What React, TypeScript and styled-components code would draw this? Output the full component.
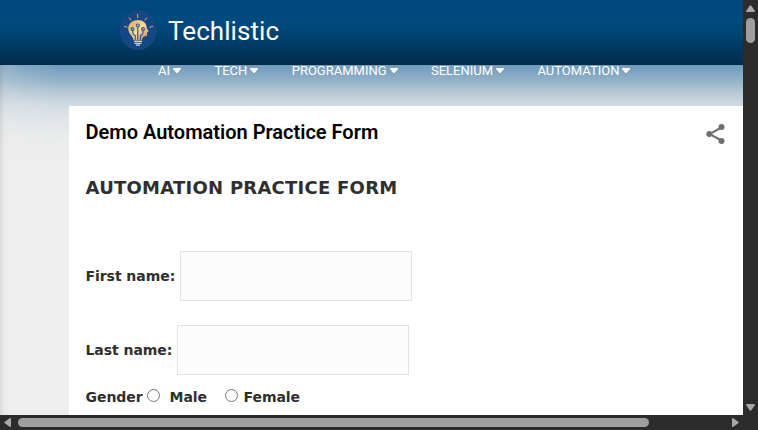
import React from "react";
import styled, { createGlobalStyle } from "styled-components";

const GlobalStyle = createGlobalStyle`
  * { box-sizing: border-box; }
  html, body { margin: 0; padding: 0; overflow: hidden; }
`;

const Window = styled.div`
  display: grid;
  grid-template: 415px 15px / 743px 15px;
  width: 758px;
  height: 430px;
  background: #2c2c2c;
  overflow: hidden;
`;

const Page = styled.div`
  display: flex;
  flex-direction: column;
  overflow: hidden;
  background: #eee;
`;

const Header = styled.header`
  display: flex;
  align-items: center;
  flex: none;
  height: 65px;
  padding: 0 0 5px 119px;
  gap: 10px;
  background: linear-gradient(#00467a 0, #004a7e 16px, #004a7e 22px, #00426f 38px, #00365c 52px, #002b4b 65px);
`;

const SiteName = styled.span`
  font: 400 26px/32px Roboto, sans-serif;
  letter-spacing: 0.06px;
  color: #fff;
  padding-top: 1px;
`;

const Body = styled.div`
  flex: 1;
  display: flex;
  flex-direction: column;
  min-height: 0;
  background:
    linear-gradient(90deg, rgba(0, 0, 0, 0.09), rgba(0, 0, 0, 0.015) 4px, transparent 10px),
    linear-gradient(90deg, rgba(238, 238, 238, 0.28), rgba(238, 238, 238, 0.12) 24px, transparent 60px),
    linear-gradient(#6f9bbc 0, #8fafc7 14px, #b5c8d6 27px, #d3dce3 41px, #e2e6e9 56px, #ebecec 74px, #eee 95px);
`;

const Nav = styled.nav`
  display: flex;
  flex: none;
  height: 41px;
  padding-left: 158px;
  gap: 33.4px;
`;

const NavItem = styled.a`
  display: flex;
  align-items: flex-start;
  gap: 3px;
  height: 12px;
  font: 400 13px/12px Roboto, sans-serif;
  color: #fff;
  white-space: nowrap;

  svg { margin-top: 3px; }
`;

const Article = styled.main`
  flex: 1;
  min-height: 0;
  overflow: hidden;
  margin-left: 69px;
  padding: 13px 17px 0 16.5px;
  background: #fff;
  color: #2f2f2f;
  font: 700 14px/20px Verdana, "DejaVu Sans", sans-serif;
`;

const TitleRow = styled.div`
  display: flex;
  justify-content: space-between;
  height: 30px;

  svg { margin-top: 4px; }
`;

const Title = styled.h1`
  margin: 0;
  font: 600 20px/27px Roboto, sans-serif;
  color: #000;
`;

const FormTitle = styled.h2`
  margin: 26px 0 0;
  font-size: 18px;
  line-height: 26px;
  letter-spacing: 0.25px;
`;

const Form = styled.form`
  display: flex;
  flex-direction: column;
  gap: 24px;
  margin-top: 50px;
`;

const Field = styled.label`
  display: flex;
  align-items: center;
  gap: 5px;
  height: 50px;
`;

const LabelText = styled.span<{ $width: number }>`
  width: ${(p) => p.$width}px;
  white-space: nowrap;
  letter-spacing: -0.05px;
`;

const TextInput = styled.input`
  width: 232px;
  height: 50px;
  border: 1px solid #e3e3e3;
  border-radius: 0;
  background: #fcfcfc;
  outline: none;
`;

const GenderRow = styled.div`
  display: flex;
  align-items: center;
  height: 20px;
  margin-top: -12px;
`;

const Choice = styled.label<{ $gap: number; $width: number }>`
  display: flex;
  align-items: center;
  gap: ${(p) => p.$gap}px;
  width: ${(p) => p.$width}px;
  letter-spacing: -0.05px;
`;

const Radio = styled.input`
  flex: none;
  width: 13px;
  height: 13px;
  margin: 0 0 3px;
`;

const ScrollTrack = styled.div<{ $vertical?: boolean }>`
  display: flex;
  flex-direction: ${(p) => (p.$vertical ? "column" : "row")};
  align-items: center;
  justify-content: space-between;
  padding: ${(p) => (p.$vertical ? "5px 0 4px" : "0 4px")};
  background: #2c2c2c;
`;

const ScrollGroup = styled.div<{ $vertical?: boolean }>`
  display: flex;
  flex-direction: ${(p) => (p.$vertical ? "column" : "row")};
  align-items: center;
  gap: ${(p) => (p.$vertical ? 6 : 7)}px;
`;

const Thumb = styled.div<{ $w: number; $h: number }>`
  width: ${(p) => p.$w}px;
  height: ${(p) => p.$h}px;
  border-radius: 5px;
  background: #9f9f9f;
`;

const Logo = () => (
  <svg width="39" height="42" viewBox="0 0 39 42">
    <defs>
      <linearGradient id="gold" x1="0" x2="1" y1="0" y2="1">
        <stop offset="0" stopColor="#d2a158" />
        <stop offset=".5" stopColor="#f8dda0" />
        <stop offset="1" stopColor="#c58b3d" />
      </linearGradient>
    </defs>
    <ellipse cx="19.2" cy="21" rx="18.5" ry="20" fill="#174783" />
    <path d="M18.7 5v4M10 8.5l2.2 3M28 8.5l-2.2 3M5 17.3l3.5 1M34 17.3l-3.5 1" stroke="#c9b58b" strokeWidth="1" />
    <path d="M18.8 11C12.6 11 9 15 9.3 20c.2 4 3 5.7 4.2 8 .7 1.3.5 2.5 1.3 3.3h8c.8-1.2.6-3.2 1.8-3.8 1.2-.5 3 0 3.3-1 .4-1.2-.1-2.1.2-2.8.2-.7 1.7-.8 1.5-1.5l-1.8-3.1C27.7 14 24 11 18.8 11Z" fill="url(#gold)" />
    <g stroke="#365b78" strokeWidth="1.2" fill="none">
      <path d="M18.8 18v13M13.7 21v2.5q0 2 2.5 3v5M24 21v2.5q0 2-2.5 3v5" />
      <circle cx="18.8" cy="16.5" r="1.5" />
      <circle cx="13.5" cy="20" r="1.4" />
      <circle cx="24" cy="20" r="1.4" />
    </g>
    <path d="M15 32.3h8M15.5 34.3h7M17 36.2h4" stroke="#ecd298" strokeWidth="1.2" />
  </svg>
);

const Caret = () => (
  <svg width="8" height="6" viewBox="0 0 8 6">
    <path d="M.8 0h6.4q1.2.2.5 1.2L4.7 4.7q-.7.6-1.4 0L.3 1.2Q-.3.2.8 0Z" fill="#fff" />
  </svg>
);

const ShareIcon = () => (
  <svg width="20" height="22" viewBox="0 0 20 22" fill="#707070">
    <path d="M15.5 4.5 3.5 11l12 6.5" fill="none" stroke="#707070" strokeWidth="2" />
    <circle cx="15.5" cy="4" r="3" />
    <circle cx="3.3" cy="11" r="3" />
    <circle cx="15.5" cy="18" r="3" />
  </svg>
);

const arrows = {
  up: "M3.7.8Q4.5-.2 5.3.8L8.8 5.7Q9.2 7 8 7H1Q-.2 7 .2 5.7Z",
  down: "M3.7 6.2Q4.5 7.2 5.3 6.2L8.8 1.3Q9.2 0 8 0H1Q-.2 0 .2 1.3Z",
  left: "M.8 3.7Q-.2 4.5.8 5.3L5.7 8.8Q7 9.2 7 8V1Q7-.2 5.7.2Z",
  right: "M6.2 3.7Q7.2 4.5 6.2 5.3L1.3 8.8Q0 9.2 0 8V1Q0-.2 1.3.2Z",
};

const Arrow = ({ direction }: { direction: keyof typeof arrows }) => {
  const vertical = direction === "up" || direction === "down";
  const w = vertical ? 9 : 7;
  const h = vertical ? 7 : 9;
  return (
    <svg width={w} height={h} viewBox={`0 0 ${w} ${h}`}>
      <path d={arrows[direction]} fill="#a8a8a8" />
    </svg>
  );
};

const menu = ["AI", "TECH", "PROGRAMMING", "SELENIUM", "AUTOMATION"];

export default function App() {
  return (
    <Window>
      <GlobalStyle />
      <Page>
        <Header>
          <Logo />
          <SiteName>Techlistic</SiteName>
        </Header>
        <Body>
          <Nav>
            {menu.map((item) => (
              <NavItem key={item}>
                {item}
                <Caret />
              </NavItem>
            ))}
          </Nav>
          <Article>
            <TitleRow>
              <Title>Demo Automation Practice Form</Title>
              <ShareIcon />
            </TitleRow>
            <FormTitle>AUTOMATION PRACTICE FORM</FormTitle>
            <Form>
              <Field>
                <LabelText $width={89.5}>First name:</LabelText>
                <TextInput />
              </Field>
              <Field>
                <LabelText $width={86.5}>Last name:</LabelText>
                <TextInput />
              </Field>
              <GenderRow>
                <LabelText $width={61.5}>Gender</LabelText>
                <Choice $gap={9.5} $width={78}>
                  <Radio type="radio" name="gender" />
                  Male
                </Choice>
                <Choice $gap={5.5} $width={80}>
                  <Radio type="radio" name="gender" />
                  Female
                </Choice>
              </GenderRow>
            </Form>
          </Article>
        </Body>
      </Page>
      <ScrollTrack $vertical>
        <ScrollGroup $vertical>
          <Arrow direction="up" />
          <Thumb $w={9} $h={25} />
        </ScrollGroup>
        <Arrow direction="down" />
      </ScrollTrack>
      <ScrollTrack>
        <ScrollGroup>
          <Arrow direction="left" />
          <Thumb $w={631} $h={9} />
        </ScrollGroup>
        <Arrow direction="right" />
      </ScrollTrack>
    </Window>
  );
}
